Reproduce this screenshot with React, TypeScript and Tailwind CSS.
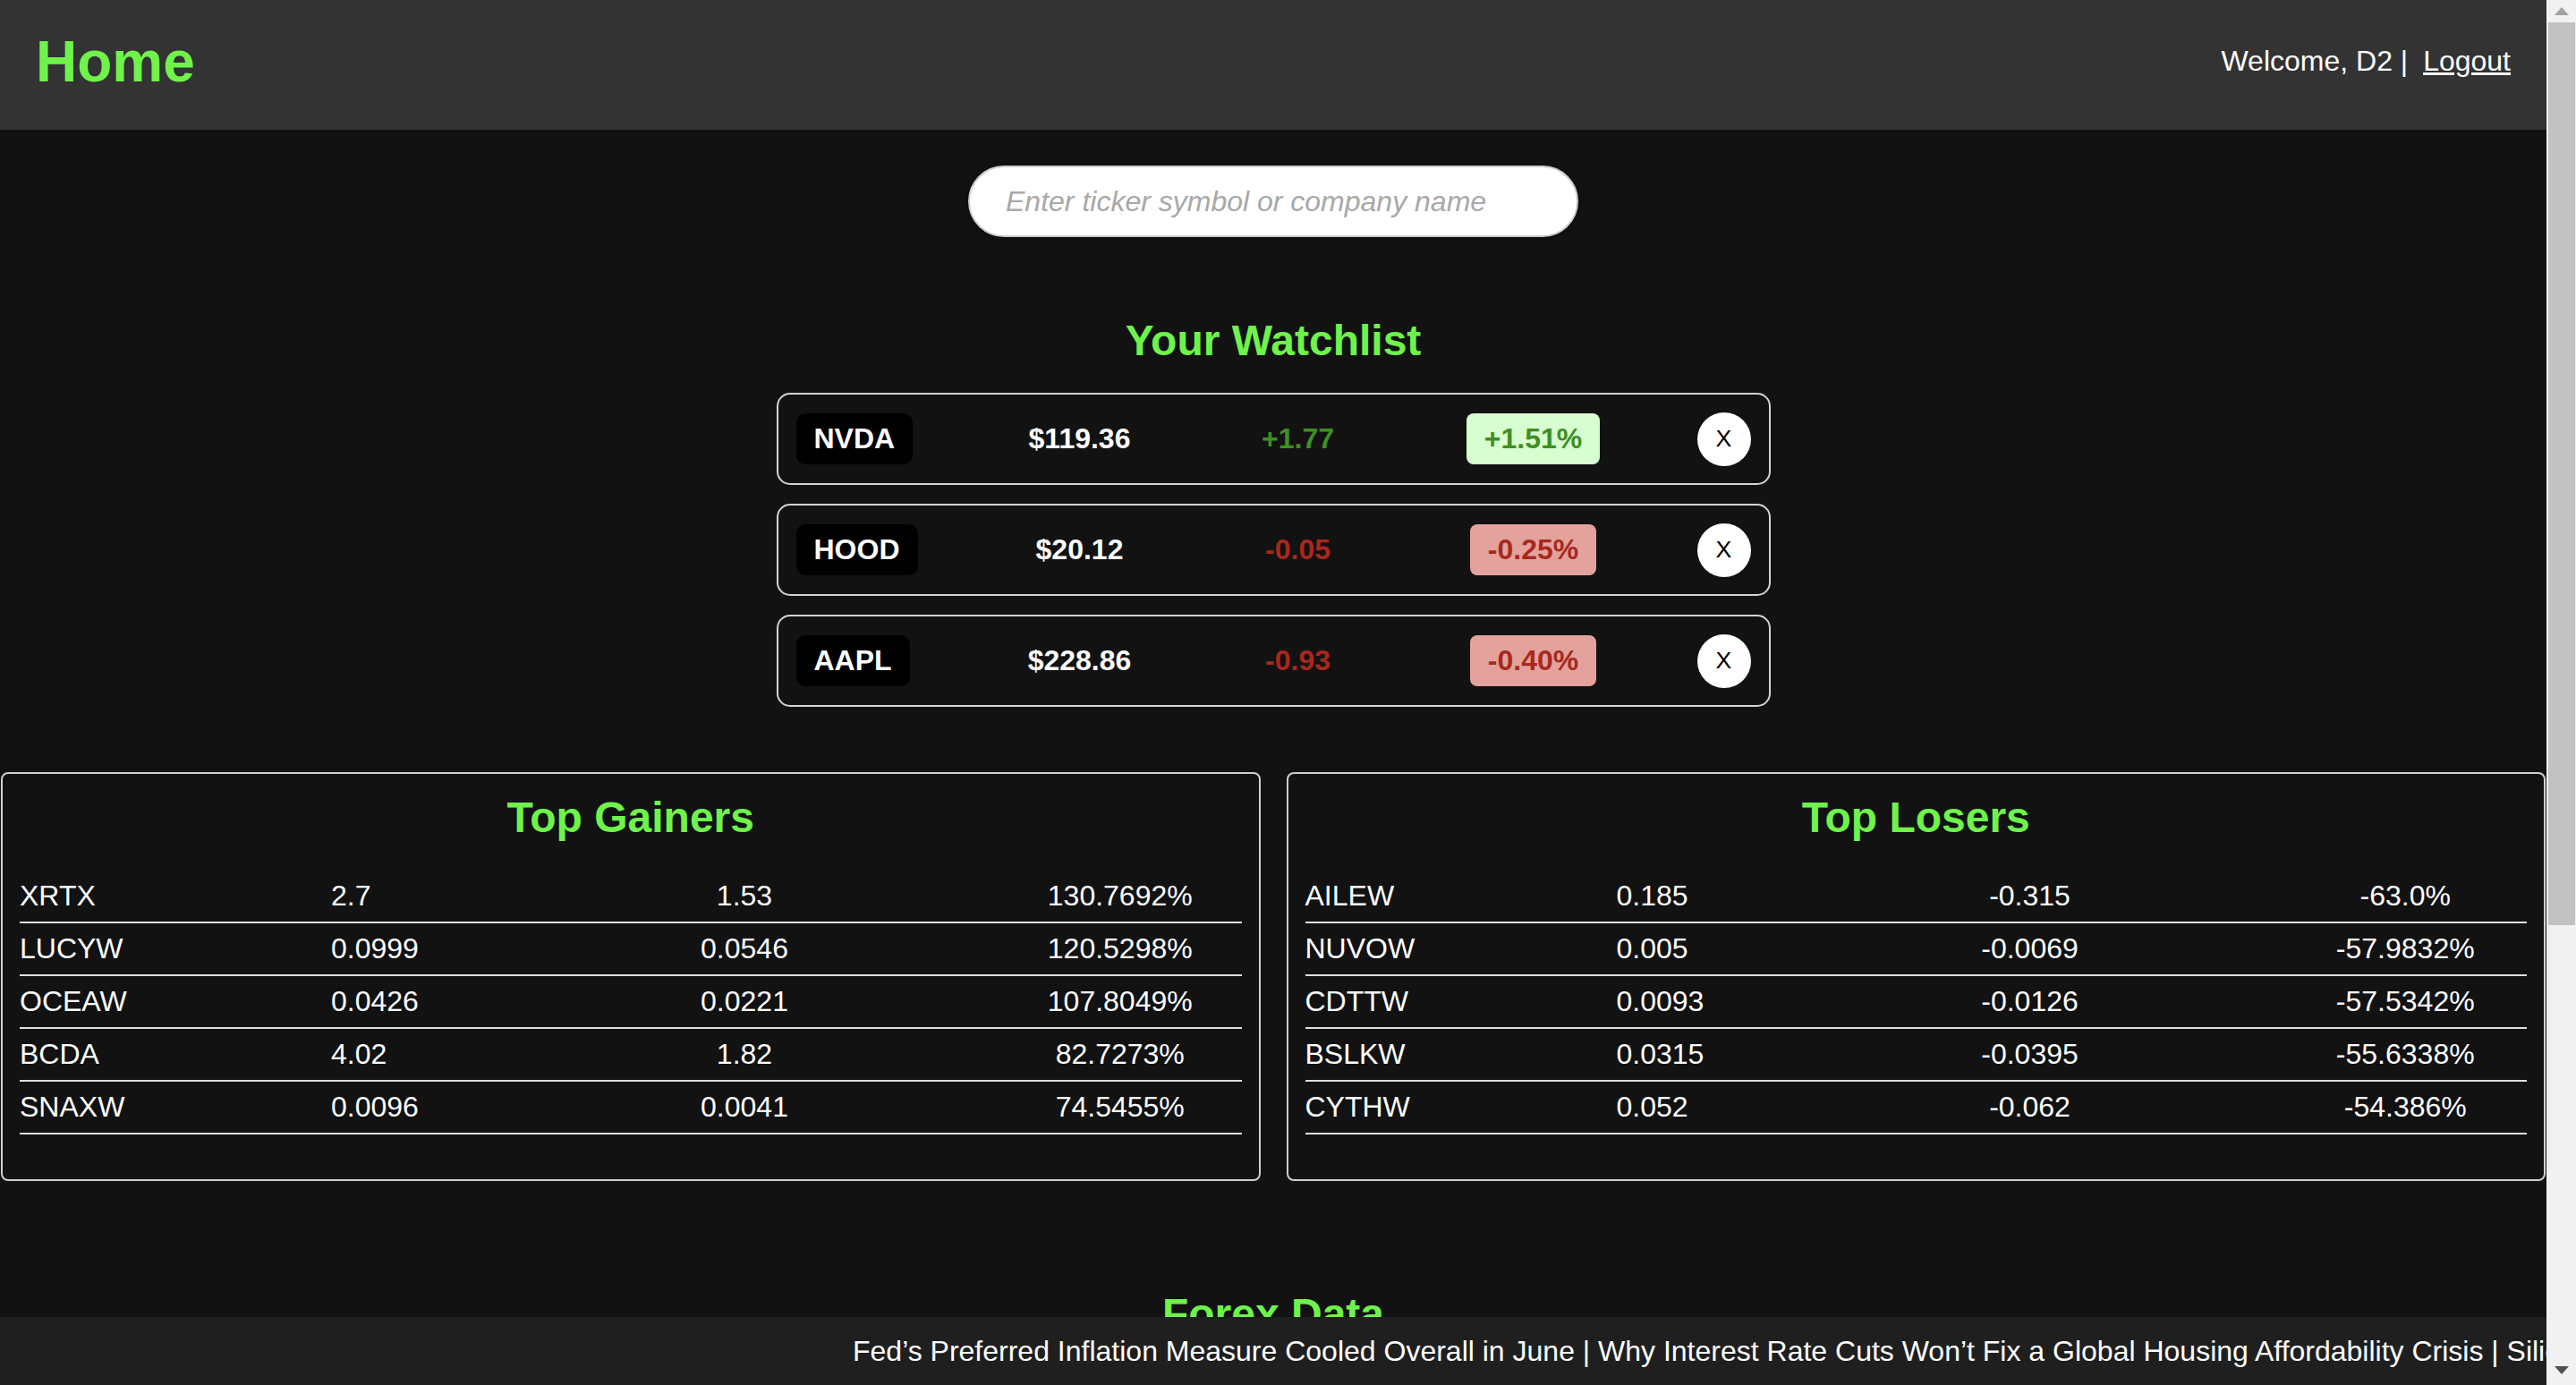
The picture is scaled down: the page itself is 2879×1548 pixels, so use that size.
import { useState } from "react";

const watchlist = [
  { symbol: "NVDA", price: "$119.36", change: "+1.77", pct: "+1.51%", up: true },
  { symbol: "HOOD", price: "$20.12", change: "-0.05", pct: "-0.25%", up: false },
  { symbol: "AAPL", price: "$228.86", change: "-0.93", pct: "-0.40%", up: false },
];

const gainers = [
  ["XRTX", "2.7", "1.53", "130.7692%"],
  ["LUCYW", "0.0999", "0.0546", "120.5298%"],
  ["OCEAW", "0.0426", "0.0221", "107.8049%"],
  ["BCDA", "4.02", "1.82", "82.7273%"],
  ["SNAXW", "0.0096", "0.0041", "74.5455%"],
];

const losers = [
  ["AILEW", "0.185", "-0.315", "-63.0%"],
  ["NUVOW", "0.005", "-0.0069", "-57.9832%"],
  ["CDTTW", "0.0093", "-0.0126", "-57.5342%"],
  ["BSLKW", "0.0315", "-0.0395", "-55.6338%"],
  ["CYTHW", "0.052", "-0.062", "-54.386%"],
];

const headlines = [
  "Fed’s Preferred Inflation Measure Cooled Overall in June",
  "Why Interest Rate Cuts Won’t Fix a Global Housing Affordability Crisis",
  "Silicon Valley’s Investors Are Betting Big on AI Infrastructure",
];

function MoversPanel({ title, rows }: { title: string; rows: string[][] }) {
  return (
    <div className="flex-1 border-2 border-[#cfcfcf] rounded-[8px] px-[19px] pt-[21px] pb-[50px]">
      <h2 className="text-[48px] leading-[55px] font-bold text-[#6ff34b] text-center mb-[32px]">
        {title}
      </h2>
      <div>
        {rows.map((r) => (
          <div
            key={r[0]}
            className="grid grid-cols-[348px_262px_400px_1fr] h-[59px] items-center border-b-2 border-[#dedede] text-[32px] leading-[37px] text-white"
          >
            <div>{r[0]}</div>
            <div>{r[1]}</div>
            <div className="text-center">{r[2]}</div>
            <div className="text-center pl-[84px]">{r[3]}</div>
          </div>
        ))}
      </div>
    </div>
  );
}

function Scrollbar() {
  return (
    <div className="w-[33px] h-full bg-[#f1f1f1] flex flex-col shrink-0">
      <div className="h-[25px] flex items-center justify-center">
        <svg width="16" height="9" viewBox="0 0 16 9">
          <polygon points="8,0 16,9 0,9" fill="#a3a3a3" />
        </svg>
      </div>
      <div className="h-[1009px] ml-[2px] mr-[1px] bg-[#c1c1c1]" />
      <div className="flex-1" />
      <div className="h-[33px] flex items-center justify-center">
        <svg width="16" height="9" viewBox="0 0 16 9">
          <polygon points="0,0 16,0 8,9" fill="#505050" />
        </svg>
      </div>
    </div>
  );
}

export default function App() {
  const [items, setItems] = useState(watchlist);
  return (
    <div className="flex h-screen w-full bg-[#121212] font-['Liberation_Sans',Arial,sans-serif] overflow-hidden">
      <div className="flex-1 flex flex-col min-w-0">
        <header className="h-[145px] shrink-0 bg-[#333333] flex items-center justify-between px-[40px] pb-[8px]">
          <h1 className="text-[64px] leading-[74px] font-bold text-[#6ff34b]">Home</h1>
          <div className="text-[32px] leading-[37px] text-white flex">
            <span>Welcome, D2 |</span>
            <a href="#" className="underline ml-[17px]">
              Logout
            </a>
          </div>
        </header>

        <main className="flex-1 overflow-hidden flex flex-col items-center">
          <input
            type="text"
            placeholder="Enter ticker symbol or company name"
            className="mt-[40px] w-[682px] h-[80px] shrink-0 rounded-full bg-white border-2 border-[#cccccc] shadow-[0_2px_8px_rgba(0,0,0,0.35)] pl-[40px] text-[32px] text-black outline-none placeholder:italic placeholder:text-[#a8a8a8]"
          />

          <h2 className="mt-[88px] text-[48px] leading-[55px] font-bold text-[#6ff34b]">
            Your Watchlist
          </h2>

          <div className="mt-[31px] flex flex-col gap-[21px]">
            {items.map((w) => (
              <div
                key={w.symbol}
                className="w-[1111px] h-[103px] border-2 border-[#d4d4d4] rounded-[15px] px-[20px] flex items-center text-[32px] leading-[37px]"
              >
                <div className="w-[200px]">
                  <span className="inline-block bg-black text-white font-bold rounded-[10px] px-[20px] py-[10px]">
                    {w.symbol}
                  </span>
                </div>
                <div className="w-[234px] text-center text-white font-bold">{w.price}</div>
                <div
                  className={`w-[254px] text-center font-bold ${
                    w.up ? "text-[#3f8f22]" : "text-[#a8281e]"
                  }`}
                >
                  {w.change}
                </div>
                <div className="w-[272px] flex justify-center">
                  <span
                    className={`inline-block font-bold rounded-[8px] px-[20px] py-[10px] ${
                      w.up ? "bg-[#d8fdd0] text-[#3f8f22]" : "bg-[#e3a39c] text-[#a8281e]"
                    }`}
                  >
                    {w.pct}
                  </span>
                </div>
                <div className="flex-1 flex justify-end">
                  <button
                    onClick={() => setItems(items.filter((i) => i.symbol !== w.symbol))}
                    className="w-[60px] h-[60px] rounded-full bg-white text-black text-[26.67px] leading-none flex items-center justify-center"
                  >
                    X
                  </button>
                </div>
              </div>
            ))}
          </div>

          <div className="mt-[73px] w-full flex gap-[29px] px-[1px]">
            <MoversPanel title="Top Gainers" rows={gainers} />
            <MoversPanel title="Top Losers" rows={losers} />
          </div>

          <h2 className="mt-[121px] shrink-0 text-[48px] leading-[55px] font-bold text-[#6ff34b]">
            Forex Data
          </h2>
        </main>

        <footer className="h-[76px] shrink-0 bg-[#1f1f1f] flex items-center overflow-hidden">
          <div className="pl-[953px] whitespace-nowrap text-[32px] leading-[37px] text-white">
            {headlines.join(" | ")}
          </div>
        </footer>
      </div>
      <Scrollbar />
    </div>
  );
}
